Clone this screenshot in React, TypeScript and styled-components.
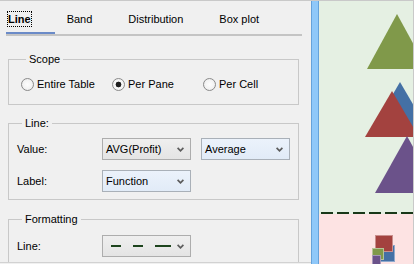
import styled, { createGlobalStyle } from 'styled-components';

const tabs = ['Line', 'Band', 'Distribution', 'Box plot'];
const scopes = ['Entire Table', 'Per Pane', 'Per Cell'];

function Chevron() {
  return (
    <svg width="7" height="5" viewBox="0 0 7 5">
      <path d="M0.6 0.8 L3.5 3.8 L6.4 0.8" fill="none" stroke="#5c5c5c" strokeWidth="1.7" />
    </svg>
  );
}

function DashSample() {
  return (
    <svg width="61" height="2" viewBox="0 0 61 2">
      <rect x="0" y="0" width="10" height="2" fill="#1d441d" />
      <rect x="22" y="0" width="10" height="2" fill="#1d441d" />
      <rect x="44" y="0" width="16" height="2" fill="#1d441d" />
    </svg>
  );
}

function Dropdown({ value, tint, children }: { value?: string; tint?: boolean; children?: React.ReactNode }) {
  return (
    <Select $tint={tint}>
      {children ?? <span>{value}</span>}
      <Chevron />
    </Select>
  );
}

function ReferenceChart() {
  const dashes = [2, 18, 34, 50, 66, 82];
  return (
    <svg width="94" height="263" viewBox="0 0 94 263">
      <rect x="0" y="0" width="94" height="213" fill="#e5f0e3" />
      <rect x="0" y="213" width="94" height="50" fill="#fde3e3" />
      <polygon points="78,13 48,68 108,68" fill="#80994a" />
      <polygon points="81,81 49,136 113,136" fill="#4470a5" />
      <polygon points="73,90 46,136 100,136" fill="#a3423f" />
      <polygon points="88,135 56,192 120,192" fill="#6b528a" />
      {dashes.map((x) => (
        <rect key={x} x={x} y="211" width="12" height="2" fill="#183818" />
      ))}
      <rect x="59.5" y="244.5" width="16" height="16" fill="#4470a5" stroke="#8fa9cc" strokeWidth="1" />
      <rect x="56.5" y="234.5" width="17" height="16" fill="#a3423f" stroke="#c98f8d" strokeWidth="1" />
      <rect x="53.5" y="247.5" width="11" height="11" fill="#80994a" stroke="#b5c397" strokeWidth="1" />
      <rect x="53.5" y="254.5" width="8" height="10" fill="#6b528a" stroke="#a597b8" strokeWidth="1" />
    </svg>
  );
}

export default function App() {
  return (
    <>
      <GlobalStyle />
      <Frame>
        <Panel>
          <PanelBody>
            <TabStrip>
              {tabs.map((t, i) => (
                <Tab key={t} $active={i === 0}>
                  <TabLabel $focused={i === 0}>{t}</TabLabel>
                </Tab>
              ))}
            </TabStrip>

            <Group $top={16} $pad="10px 0 12px 12px">
              <Caption>Scope</Caption>
              <RadioRow>
                {scopes.map((s) => (
                  <RadioItem key={s}>
                    <RadioDot $checked={s === 'Per Pane'} />
                    {s}
                  </RadioItem>
                ))}
              </RadioRow>
            </Group>

            <Group $top={11} $pad="8px 0 7px 8px">
              <Caption>Line:</Caption>
              <FieldGrid>
                <FieldLabel>Value:</FieldLabel>
                <Dropdown value="AVG(Profit)" />
                <Dropdown value="Average" tint />
                <FieldLabel>Label:</FieldLabel>
                <Dropdown value="Function" tint />
              </FieldGrid>
            </Group>

            <Group $top={12} $pad="9px 0 20px 8px">
              <Caption>Formatting</Caption>
              <FieldGrid>
                <FieldLabel>Line:</FieldLabel>
                <Dropdown>
                  <SampleWrap>
                    <DashSample />
                  </SampleWrap>
                </Dropdown>
              </FieldGrid>
            </Group>
          </PanelBody>
        </Panel>
        <Splitter />
        <ChartArea>
          <ReferenceChart />
        </ChartArea>
      </Frame>
    </>
  );
}

const GlobalStyle = createGlobalStyle`
  html, body {
    margin: 0;
    padding: 0;
    background: #ffffff;
  }
  body {
    font-family: "Liberation Sans", Arial, sans-serif;
    font-size: 11px;
    color: #000;
  }
`;

const Frame = styled.div`
  width: 414px;
  height: 264px;
  box-sizing: border-box;
  border-top: 1px solid #c9c9c9;
  border-right: 1px solid #c9c9c9;
  display: flex;
  overflow: hidden;
`;

const Panel = styled.div`
  width: 311px;
  flex: none;
  background: #f0f0f0;
`;

const PanelBody = styled.div`
  height: 262px;
  box-sizing: border-box;
  padding-left: 6px;
  border-bottom: 1px solid #d2d2d2;
  overflow: hidden;
`;

const TabStrip = styled.div`
  width: 296px;
  display: flex;
  gap: 10px;
  border-bottom: 2px solid #c4c4c4;
`;

const Tab = styled.div<{ $active?: boolean }>`
  height: 33px;
  box-sizing: border-box;
  padding: 11px 24px 0 2px;
  border-bottom: 2px solid ${(p) => (p.$active ? '#6b8bc8' : 'transparent')};
  font-weight: ${(p) => (p.$active ? 700 : 400)};
`;

const TabLabel = styled.span<{ $focused?: boolean }>`
  display: inline-block;
  line-height: 14px;
  outline: ${(p) => (p.$focused ? '1px dotted #000' : 'none')};
`;

const Group = styled.fieldset<{ $top: number; $pad: string }>`
  margin: ${(p) => p.$top}px 0 0 2px;
  width: 291px;
  box-sizing: border-box;
  min-width: 0;
  padding: ${(p) => p.$pad};
  border: 1px solid #c8c8c8;
`;

const Caption = styled.legend`
  margin-left: 5px;
  padding: 0 3px;
  line-height: 14px;
  font-size: 11px;
`;

const RadioRow = styled.div`
  display: grid;
  grid-template-columns: repeat(3, 91px);
`;

const RadioItem = styled.label`
  display: flex;
  align-items: center;
  gap: 3px;
  height: 16px;
`;

const RadioDot = styled.span<{ $checked?: boolean }>`
  width: 13px;
  height: 13px;
  box-sizing: border-box;
  border-radius: 50%;
  border: 1px solid #8a8a8a;
  background: ${(p) =>
    p.$checked
      ? 'radial-gradient(circle, #1e1e1e 0 2.6px, #fafafa 3.2px, #e6e6e6 100%)'
      : 'radial-gradient(circle, #fdfdfd 0, #f3f3f3 55%, #e2e2e2 100%)'};
`;

const FieldGrid = styled.div`
  display: grid;
  grid-template-columns: 75px 89px 89px;
  column-gap: 10px;
  row-gap: 10px;
  align-items: center;
`;

const FieldLabel = styled.span`
  line-height: 14px;
`;

const Select = styled.div<{ $tint?: boolean }>`
  height: 22px;
  box-sizing: border-box;
  border: 1px solid ${(p) => (p.$tint ? '#a9b0b8' : '#adadad')};
  background: ${(p) =>
    p.$tint ? 'linear-gradient(#ebf2fb, #e1ebf7)' : 'linear-gradient(#efefef, #e4e4e4)'};
  display: flex;
  align-items: center;
  justify-content: space-between;
  padding: 0 6px 0 3px;
`;

const SampleWrap = styled.span`
  display: flex;
  margin-left: 5px;
`;

const Splitter = styled.div`
  width: 8px;
  flex: none;
  box-sizing: border-box;
  background: #8fc8f9;
  border-left: 1px solid #66a2da;
  border-right: 1px solid #66a2da;
`;

const ChartArea = styled.div`
  flex: 1;
  display: flex;
  overflow: hidden;
`;
